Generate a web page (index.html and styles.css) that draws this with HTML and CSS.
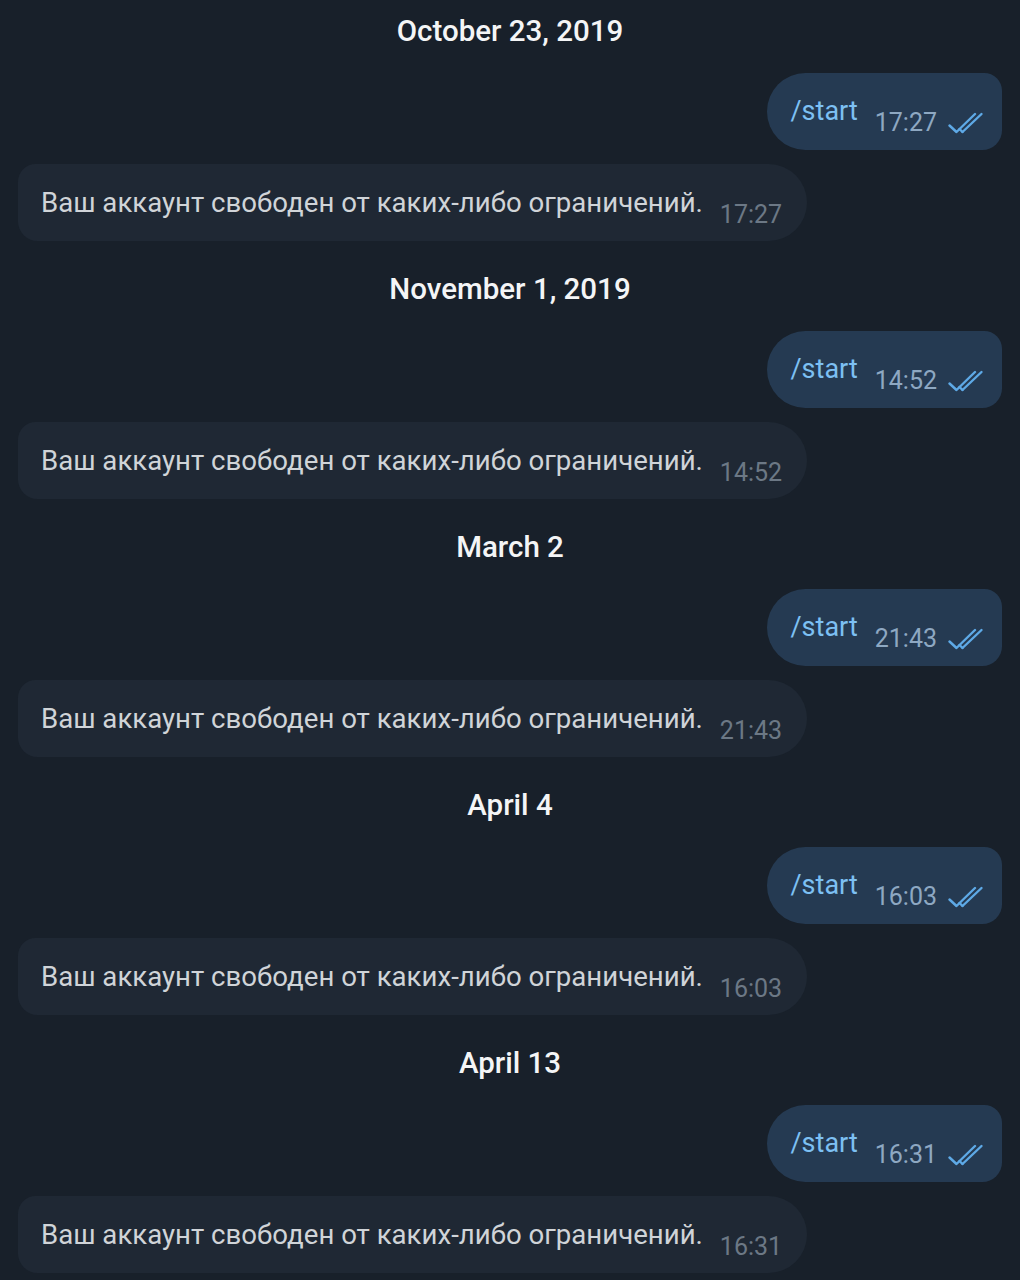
FILE: index.html
```html
<!DOCTYPE html>
<html lang="ru">
  <head>
    <meta charset="UTF-8" />
    <meta name="viewport" content="width=device-width, initial-scale=1.0" />
    <title>Chat</title>
    <link rel="stylesheet" href="styles.css">
  </head>
  <body>
    <div class="chat">
      <div class="date">October 23, 2019</div>
      <div class="msg out">
        <span class="text">/start</span>
        <span class="time">17:27</span>
        <svg class="ticks" viewBox="0 0 38 22"><path d="M1.5 13.5 L8.5 20 L27 2" /><path d="M14.5 20 L33.5 2" /><path d="M11.5 17 L14.5 20" /></svg>
      </div>
      <div class="msg in">
        <span class="text">Ваш аккаунт свободен от каких-либо ограничений.</span>
        <span class="time">17:27</span>
      </div>

      <div class="date">November 1, 2019</div>
      <div class="msg out">
        <span class="text">/start</span>
        <span class="time">14:52</span>
        <svg class="ticks" viewBox="0 0 38 22"><path d="M1.5 13.5 L8.5 20 L27 2" /><path d="M14.5 20 L33.5 2" /><path d="M11.5 17 L14.5 20" /></svg>
      </div>
      <div class="msg in">
        <span class="text">Ваш аккаунт свободен от каких-либо ограничений.</span>
        <span class="time">14:52</span>
      </div>

      <div class="date">March 2</div>
      <div class="msg out">
        <span class="text">/start</span>
        <span class="time">21:43</span>
        <svg class="ticks" viewBox="0 0 38 22"><path d="M1.5 13.5 L8.5 20 L27 2" /><path d="M14.5 20 L33.5 2" /><path d="M11.5 17 L14.5 20" /></svg>
      </div>
      <div class="msg in">
        <span class="text">Ваш аккаунт свободен от каких-либо ограничений.</span>
        <span class="time">21:43</span>
      </div>

      <div class="date">April 4</div>
      <div class="msg out">
        <span class="text">/start</span>
        <span class="time">16:03</span>
        <svg class="ticks" viewBox="0 0 38 22"><path d="M1.5 13.5 L8.5 20 L27 2" /><path d="M14.5 20 L33.5 2" /><path d="M11.5 17 L14.5 20" /></svg>
      </div>
      <div class="msg in">
        <span class="text">Ваш аккаунт свободен от каких-либо ограничений.</span>
        <span class="time">16:03</span>
      </div>

      <div class="date">April 13</div>
      <div class="msg out">
        <span class="text">/start</span>
        <span class="time">16:31</span>
        <svg class="ticks" viewBox="0 0 38 22"><path d="M1.5 13.5 L8.5 20 L27 2" /><path d="M14.5 20 L33.5 2" /><path d="M11.5 17 L14.5 20" /></svg>
      </div>
      <div class="msg in">
        <span class="text">Ваш аккаунт свободен от каких-либо ограничений.</span>
        <span class="time">16:31</span>
      </div>
    </div>
  </body>
</html>
```

FILE: styles.css
```css
*,
*::before,
*::after {
  box-sizing: border-box;
}

body {
  margin: 0;
  background-color: #18202a;
  font-family: Roboto, "Noto Sans", sans-serif;
  height: 1280px;
  overflow: hidden;
}

.chat {
  display: flex;
  flex-direction: column;
  padding: 0 18px;
}

.date {
  align-self: center;
  margin: 14px 0 25px;
  font-size: 29.5px;
  line-height: 34px;
  font-weight: 500;
  color: #f4f5f6;
}

.msg {
  display: flex;
  align-items: flex-end;
  height: 77px;
  padding: 22px 18px 0 23px;
}

.msg + .msg {
  margin-top: 14px;
}

.msg + .date {
  margin-top: 31px;
}

.text {
  font-size: 27px;
  line-height: 33px;
  align-self: flex-start;
}

.time {
  font-size: 25px;
  line-height: 25px;
  margin-bottom: 15px;
  margin-left: 17px;
}

.out {
  align-self: flex-end;
  background-color: #253a52;
  border-radius: 39px 18px 20px 39px;
}

.out .text {
  color: #7dc0f3;
}

.out .time {
  color: #8ea8c2;
}

.ticks {
  width: 38px;
  height: 22px;
  margin: 0 -2px 16px 11px;
  fill: none;
  stroke: #5ea9e6;
  stroke-width: 2.4;
  stroke-linecap: round;
  stroke-linejoin: round;
}

.in {
  align-self: flex-start;
  background-color: #1f2834;
  border-radius: 18px 39px 39px 20px;
  padding-right: 25px;
}

.in .text {
  font-size: 27.6px;
  color: #d0d4d8;
}

.in .time {
  color: #6c7885;
  margin-bottom: 14px;
}
```
